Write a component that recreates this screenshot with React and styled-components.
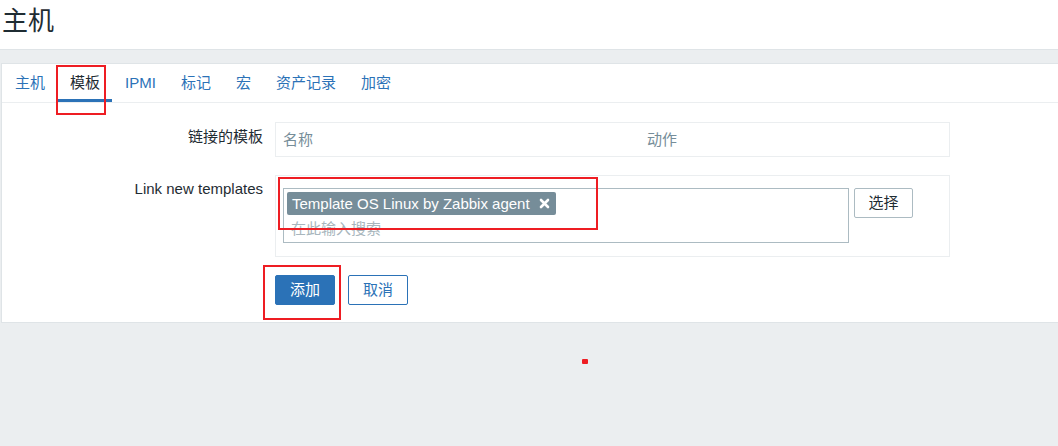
import React from "react";
import styled, { createGlobalStyle } from "styled-components";

const GlobalStyle = createGlobalStyle`
  html, body {
    margin: 0;
    padding: 0;
    background: #ebeef0;
    overflow: hidden;
  }
  body {
    font-family: "Liberation Sans", Arial, "Noto Sans CJK SC", sans-serif;
    font-size: 15px;
    color: #1f2c33;
  }
`;

const Page = styled.div`
  position: relative;
  width: 1058px;
  height: 446px;
  background: #ebeef0;
`;

const Header = styled.header`
  height: 49px;
  background: #fff;
  border-bottom: 1px solid #dfe4e7;
  padding: 0 2px;
`;

const Title = styled.h1`
  margin: 0;
  padding-top: 6px;
  font-size: 26px;
  line-height: 30px;
  font-weight: normal;
  color: #1f2c33;
`;

const Main = styled.main`
  padding: 13px 0 0 1px;
`;

const Panel = styled.section`
  background: #fff;
  border: 1px solid #dfe4e7;
  border-right: none;
`;

const TabList = styled.nav`
  display: flex;
  gap: 1px;
  padding-left: 1px;
  height: 38px;
  border-bottom: 1px solid #ebeef0;
`;

const Tab = styled.a`
  display: flex;
  align-items: center;
  padding: 3px 12px 0;
  height: 38px;
  box-sizing: border-box;
  line-height: 20px;
  color: ${(p) => (p.$active ? "#1f2c33" : "#2b72b7")};
  border-bottom: 3px solid ${(p) => (p.$active ? "#2b72b7" : "transparent")};
  cursor: pointer;
`;

const Form = styled.div`
  display: grid;
  grid-template-columns: 261px 675px;
  column-gap: 12px;
  row-gap: 18px;
  padding: 19px 0 17px;
`;

const Label = styled.label`
  text-align: right;
  line-height: 20px;
  padding-top: ${(p) => p.$top}px;
`;

const Box = styled.div`
  border: 1px solid #ebeef0;
  box-sizing: border-box;
`;

const TableHead = styled.div`
  display: grid;
  grid-template-columns: 364px 1fr;
  height: 33px;
  align-items: center;
  color: #768d99;
`;

const HeadCell = styled.div`
  padding-left: 7px;
  line-height: 20px;
`;

const PickerRow = styled.div`
  display: flex;
  align-items: flex-start;
  padding: 12px 0 13px 7px;
`;

const MultiSelect = styled.div`
  width: 566px;
  height: 55px;
  box-sizing: border-box;
  border: 1px solid #acbbc2;
  padding: 3px;
  display: flex;
  flex-direction: column;
  align-items: flex-start;
`;

const Tag = styled.span`
  display: inline-flex;
  align-items: center;
  height: 23px;
  box-sizing: border-box;
  padding: 0 6px 0 5px;
  background: #768d99;
  color: #fff;
  border-radius: 2px;
  line-height: 20px;
  gap: 9px;
`;

const Placeholder = styled.span`
  padding: 4px 0 0 4px;
  line-height: 20px;
  color: #a8b6bd;
`;

const Button = styled.button`
  font: inherit;
  line-height: 20px;
  height: 30px;
  width: ${(p) => p.$w}px;
  padding: 0;
  border-radius: 2px;
  cursor: pointer;
  background: ${(p) => (p.$primary ? "#2b72b7" : "#fff")};
  color: ${(p) => (p.$primary ? "#fff" : p.$outline ? "#2b72b7" : "#1f2c33")};
  border: 1px solid
    ${(p) => (p.$primary || p.$outline ? "#2b72b7" : "#acbbc2")};
`;

const SelectButton = styled(Button)`
  margin-left: 5px;
`;

const Actions = styled.div`
  grid-column: 2;
  display: flex;
  gap: 13px;
`;

const Mark = styled.div`
  position: absolute;
  left: ${(p) => p.$x}px;
  top: ${(p) => p.$y}px;
  width: ${(p) => p.$w}px;
  height: ${(p) => p.$h}px;
  box-sizing: border-box;
  border: 2px solid #ee1d23;
  pointer-events: none;
`;

const Dot = styled.div`
  position: absolute;
  left: 582px;
  top: 359px;
  width: 6px;
  height: 5px;
  border-radius: 1px;
  background: #ee1d23;
`;

const RemoveIcon = () => (
  <svg width="11" height="11" viewBox="0 0 11 11" aria-hidden="true">
    <path
      d="M2 2L9 9M9 2L2 9"
      stroke="#fff"
      strokeWidth="2.6"
      strokeLinecap="round"
    />
  </svg>
);

const tabs = ["主机", "模板", "IPMI", "标记", "宏", "资产记录", "加密"];

export default function App() {
  return (
    <Page>
      <GlobalStyle />
      <Header>
        <Title>主机</Title>
      </Header>
      <Main>
        <Panel>
          <TabList>
            {tabs.map((t) => (
              <Tab key={t} $active={t === "模板"}>
                {t}
              </Tab>
            ))}
          </TabList>
          <Form>
            <Label $top={5}>链接的模板</Label>
            <Box>
              <TableHead>
                <HeadCell>名称</HeadCell>
                <HeadCell>动作</HeadCell>
              </TableHead>
            </Box>

            <Label $top={4}>Link new templates</Label>
            <Box>
              <PickerRow>
                <MultiSelect>
                  <Tag>
                    Template OS Linux by Zabbix agent
                    <RemoveIcon />
                  </Tag>
                  <Placeholder>在此输入搜索</Placeholder>
                </MultiSelect>
                <SelectButton $w={59}>选择</SelectButton>
              </PickerRow>
            </Box>

            <Actions>
              <Button $primary $w={60}>添加</Button>
              <Button $outline $w={60}>取消</Button>
            </Actions>
          </Form>
        </Panel>
      </Main>

      <Mark $x={56} $y={65} $w={50} $h={50} />
      <Mark $x={278} $y={177} $w={320} $h={53} />
      <Mark $x={263} $y={265} $w={78} $h={55} />
      <Dot />
    </Page>
  );
}
